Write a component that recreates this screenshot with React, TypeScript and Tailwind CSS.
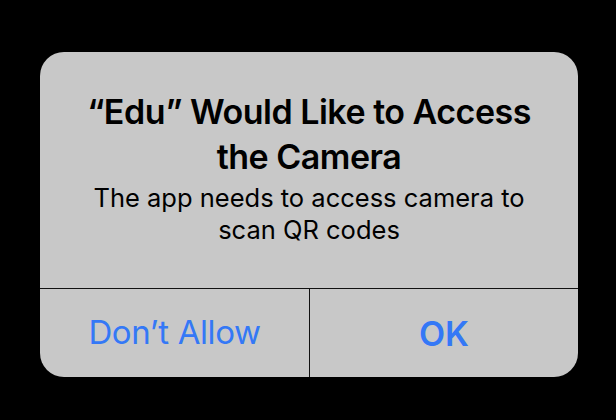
import React from "react";

export default function App() {
  return (
    <div className="w-[616px] h-[420px] bg-black pt-[52px] pl-[40px]" style={{ fontFamily: "Inter, 'Noto Sans', sans-serif" }}>
      <div className="w-[538px] h-[325px] bg-[#c8c8c8] rounded-[24px] overflow-hidden flex flex-col">
        <div className="flex-1 flex flex-col items-center pt-[37px] px-[30px]">
          <div className="text-[34px] leading-[45px] font-semibold text-black text-center tracking-[-0.5px]">
            “Edu” Would Like to Access the Camera
          </div>
          <div className="mt-[3px] text-[25.5px] leading-[32px] text-black text-center px-[15px]">
            The app needs to access camera to scan QR codes
          </div>
        </div>
        <div className="h-[89px] border-t border-[#111] flex">
          <div className="flex-1 flex items-center justify-center border-r border-[#111] text-[33px] tracking-[-0.4px] text-[#3478f6]">
            Don’t Allow
          </div>
          <div className="w-[268px] flex items-center justify-center text-[34px] font-semibold text-[#3478f6]">
            OK
          </div>
        </div>
      </div>
    </div>
  );
}
